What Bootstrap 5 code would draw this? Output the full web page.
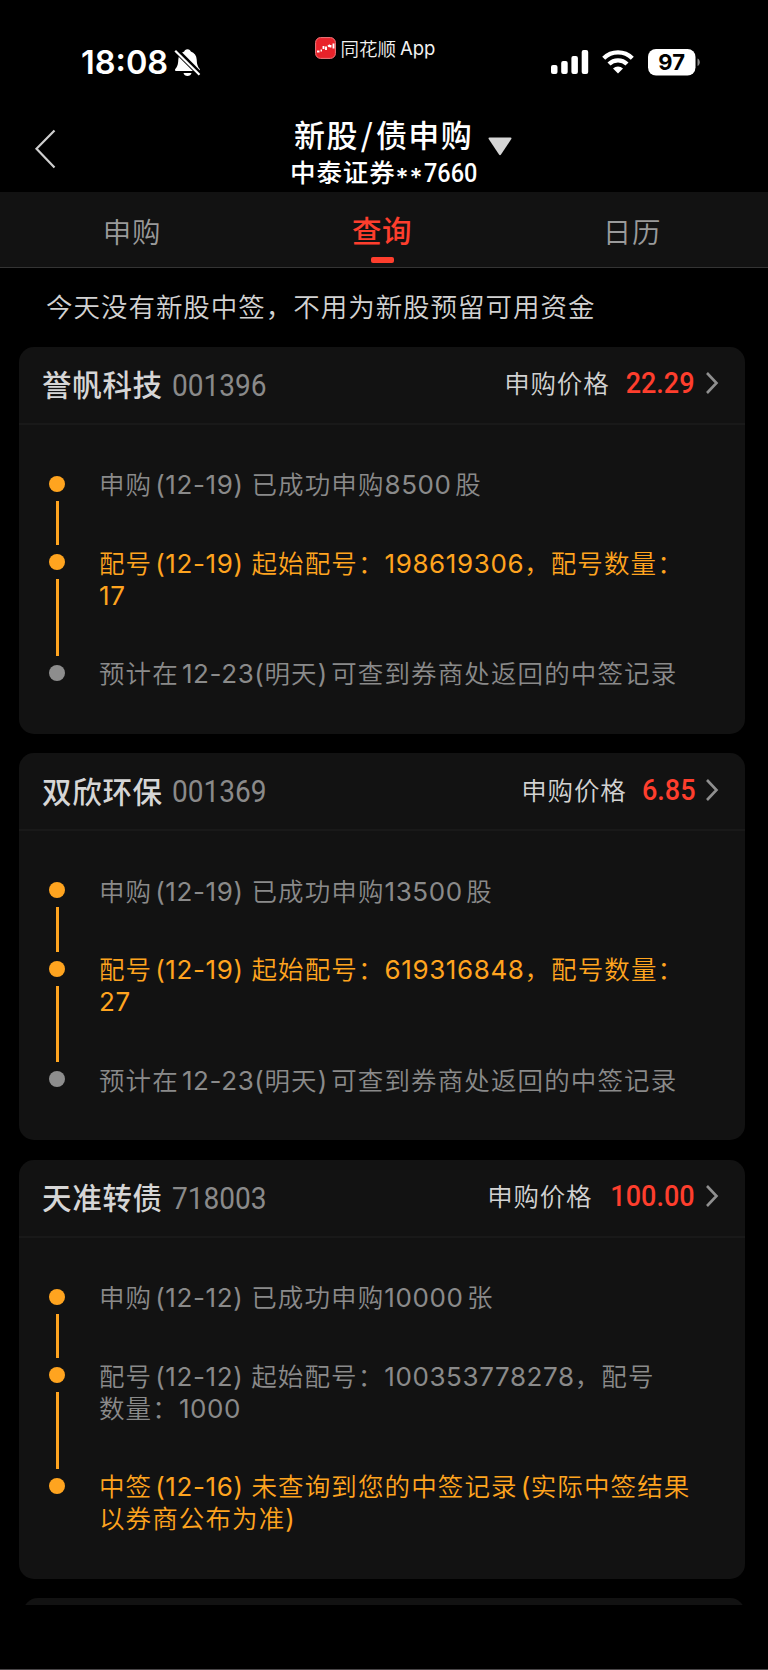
<!DOCTYPE html>
<html lang="zh-CN">
<head>
<meta charset="utf-8">
<meta name="viewport" content="width=device-width, initial-scale=1">
<title>新股/债申购</title>
<link href="https://cdn.jsdelivr.net/npm/bootstrap@5.3.0/dist/css/bootstrap.min.css" rel="stylesheet">
<style>
  body { background: #000; color: #d2d2d2; font-family: Inter, "Noto Sans CJK SC", sans-serif; height: 1670px; overflow: hidden; line-height: 1; }
  .cjk { font-family: "Noto Sans CJK SC", sans-serif; }
  .screen { height: 1670px; border-bottom: 1px solid #4a4648; }
  .status-row { height: 106px; padding: 0 68px 0 81px; color: #fff; }
  .clock { font-size: 32.5px; font-weight: 600; margin-top: 46px; line-height: 34px; width: 92px; letter-spacing: 0; }
  .bell { margin-top: 48px; }
  .app-tag { font-size: 18.5px; line-height: 26px; margin-top: 34.5px; margin-left: 114px; color: #f2f2f2; font-weight: 350; }
  .app-tag svg { margin-right: 4.5px; }
  .app-tag .latin { font-family: Inter, sans-serif; font-size: 18.5px; margin-left: 4px; font-weight: 400; }
  .status-icons { margin-top: 48px; height: 28px; }
  .wifi { margin-left: 13px; }
  .battery { margin-left: 14.5px; }
  .title-row { height: 86px; }
  .back-btn { width: 290px; padding: 23px 0 0 34px; }
  .page-title { font-size: 31px; font-weight: 500; line-height: 36px; color: #fff; letter-spacing: 1.45px; margin: 10px 0 0 4px; white-space: nowrap; }
  .page-title .slash { display: inline-block; width: 17px; text-align: center; }
  .caret { margin: 31px 0 0 15px; }
  .broker { font-size: 25.5px; font-weight: 500; line-height: 32px; color: #fff; letter-spacing: .9px; margin-top: -1px; white-space: nowrap; }
  .stars { font-family: Inter, sans-serif; display: inline-block; line-height: 0; position: relative; top: 5px; letter-spacing: 1px; font-size: 25px; }
  .din { font-family: Roboto, sans-serif; display: inline-block; transform: scaleX(.92); transform-origin: left center; white-space: nowrap; letter-spacing: 0; }
  .tabs { height: 76px; background: #121212; border-bottom: 1px solid #343434; font-size: 28.5px; padding: 0 11px 0 7px; }
  .tabs .nav-link { color: #9a9a9a; padding: 19px 0 0; line-height: 40px; border: 0; font-weight: 350; letter-spacing: .8px; }
  .tabs .nav-link.active { color: #fe3e2d; font-weight: 500; font-size: 29.5px; letter-spacing: .5px; padding-top: 17px; }
  .tabs .bar { width: 23px; height: 6px; border-radius: 2px; background: #fe3e2d; margin: 7.5px auto 0; }
  .notice { padding: 18.5px 0 0 46px; height: 78.5px; font-size: 26.5px; line-height: 38px; letter-spacing: .97px; font-weight: 350; }
  .ipo { margin: 0 23px 19.5px 19px; background: #121212; border: 0; border-radius: 15px; }
  .ipo-head { height: 78px; padding: 0 23px 3px 23px; border-bottom: 2px solid #191919; }
  .ipo-name { font-size: 29.5px; font-weight: 500; letter-spacing: .7px; color: #d6d6d6; line-height: 40px; }
  .ipo-code { font-size: 30.5px; color: #8a8a8a; width: 110px; margin: 5px 0 0 9px; line-height: 40px; }
  .price-label { font-size: 25.5px; letter-spacing: .8px; color: #d2d2d2; font-weight: 350; line-height: 36px; margin-top: -1.5px; }
  .price { font-size: 30px; font-weight: 500; color: #fe3e2d; transform: scaleX(.9); transform-origin: right center; line-height: 36px; margin-left: 9px; }
  .chev { margin-left: 7px; }
  .steps { padding: 43.5px 30px; }
  .rail { width: 16px; margin-right: 34px; padding-top: 7.75px; }
  .dot { width: 16px; height: 16px; border-radius: 50%; background: #ffa41f; flex: none; }
  .dot.off { background: #8d8d8d; }
  .wire { width: 3px; background: #ffa41f; margin: 9px 0 1.5px; }
  .step { line-height: 32px; font-size: 25.5px; letter-spacing: 1.12px; color: #8a8a8a; font-weight: 350; white-space: nowrap; }
  .step .txt { padding-top: 1px; }
  .step:not(:last-child) .txt { padding-bottom: 45.5px; }
  .step.hot { color: #ffa41f; }
  .n { letter-spacing: .6px; font-size: 26px; font-weight: 400; }
  .lg { margin-left: 3px; }
  .rg { margin-right: 3.5px; }
  .peek { height: 7px; overflow: hidden; }
  .peek .ipo { margin-left: 23px; }
</style>
</head>
<body>
<div class="screen">
<header>
  <div class="status-row d-flex align-items-start">
    <div class="clock">18:08</div>
    <svg class="bell" width="28" height="30" viewBox="0 0 28 30" fill="#fff"><path d="M14.500 1.200c1.900 0 3 1 3.300 2.300 3.600 1.300 5.700 4.200 5.900 8 .2 5.300 1.200 7.300 2.800 9.200.9 1.100.4 2.400-1 2.400H3.500c-1.500 0-2-1.300-1-2.400C4.200 18.700 5.200 16.700 5.300 11.500c.2-3.800 2.300-6.700 5.900-8 .3-1.300 1.400-2.300 3.300-2.300zM10.500 25h8c-.4 1.900-2 3-4 3s-3.600-1.100-4-3z"/><path d="M3 2.300 26.500 25.800" stroke="#000" stroke-width="5.500"/><path d="M2.200 2.800 26.500 26.800" stroke="#fff" stroke-width="2.200"/></svg>
    <div class="app-tag cjk d-flex align-items-center"><svg width="21" height="22" viewBox="0 0 21 22"><rect x=".6" y=".6" width="19.800" height="20.800" rx="5" fill="#e8222a" stroke="#f27a7d" stroke-width="1"/><path d="M2 14.500h2.500M5.500 13.500h1.500M8.500 9v3M11 9.500v3.500M13 9.500l2-1.500M15.500 8v2.500M18.500 6.500v5" stroke="#fff" stroke-width="1.900"/></svg><span>同花顺</span><span class="latin">App</span></div>
    <div class="status-icons d-flex align-items-center ms-auto">
      <svg width="38" height="24" viewBox="0 0 38 24" fill="#fff"><rect x="0" y="15" width="6.500" height="9" rx="2"/><rect x="10.200" y="11" width="6.500" height="13" rx="2"/><rect x="20.400" y="6" width="6.500" height="18" rx="2"/><rect x="30.700" y="0" width="6.500" height="24" rx="2"/></svg>
      <svg class="wifi" width="32" height="24" viewBox="0 0 32 24" fill="none" stroke="#fff" stroke-width="4.300"><path d="M1.700 8.200a20.500 20.500 0 0 1 28.600 0"/><path d="M7 14a12.800 12.800 0 0 1 18 0"/><path d="M16 23.500l-5-5a7.300 7.300 0 0 1 10 0z" fill="#fff" stroke="none"/></svg>
      <svg class="battery" width="52" height="27" viewBox="0 0 52 27"><rect width="47.500" height="26.500" rx="8" fill="#fff"/><path d="M49.500 9.500c3 .8 3 6.700 0 7.500z" fill="#8a8a8a"/><text x="23.700" y="21" text-anchor="middle" font-family="Inter" font-size="22" font-weight="700" fill="#000">97</text></svg>
    </div>
  </div>
  <div class="title-row d-flex cjk">
    <div class="back-btn"><svg width="22" height="40" viewBox="0 0 22 40" fill="none" stroke="#cfcfcf" stroke-width="2.200"><path d="M20.500 1.500 2.500 19.800 20.500 38.500"/></svg></div>
    <div>
      <div class="d-flex"><div class="page-title">新股<span class="slash">/</span>债申购</div><svg class="caret" width="24" height="19" viewBox="0 0 24 19"><path d="M1.500.5h21q1.500 0 .8 1.500L13 17.500q-1 1.300-2 0L.7 2Q0 .5 1.500.5z" fill="#d6d6d6"/></svg></div>
      <div class="broker">中泰证券<span class="stars">**</span><span class="din">7660</span></div>
    </div>
  </div>
</header>
<nav class="tabs nav nav-justified flex-nowrap cjk">
  <a class="nav-item nav-link" href="#">申购</a>
  <a class="nav-item nav-link active" href="#">查询<div class="bar"></div></a>
  <a class="nav-item nav-link" href="#">日历</a>
</nav>
<main>
  <div class="notice cjk">今天没有新股中签，不用为新股预留可用资金</div>

  <section class="card ipo">
    <div class="ipo-head d-flex align-items-center">
      <span class="ipo-name cjk">誉帆科技</span><span class="din ipo-code">001396</span>
      <span class="price-label cjk ms-auto">申购价格</span><span class="din price">22.29</span>
      <svg class="chev" width="20" height="24" viewBox="0 0 20 24" fill="none" stroke="#8f8f8f" stroke-width="2.600"><path d="M5 2l9.500 10L5 22"/></svg>
    </div>
    <div class="steps">
      <div class="step d-flex"><div class="rail d-flex flex-column align-items-center"><i class="dot"></i><i class="wire flex-grow-1"></i></div><div class="txt">申购<span class="n lg">(12-19) </span>已成功申购<span class="n rg">8500</span>股</div></div>
      <div class="step hot d-flex"><div class="rail d-flex flex-column align-items-center"><i class="dot"></i><i class="wire flex-grow-1"></i></div><div class="txt">配号<span class="n lg">(12-19) </span>起始配号：<span class="n">198619306</span>，配号数量：<br><span class="n">17</span></div></div>
      <div class="step d-flex"><div class="rail d-flex flex-column align-items-center"><i class="dot off"></i></div><div class="txt">预计在<span class="n lg">12-23(</span>明天<span class="n rg">)</span>可查到券商处返回的中签记录</div></div>
    </div>
  </section>

  <section class="card ipo">
    <div class="ipo-head d-flex align-items-center">
      <span class="ipo-name cjk">双欣环保</span><span class="din ipo-code">001369</span>
      <span class="price-label cjk ms-auto">申购价格</span><span class="din price">6.85</span>
      <svg class="chev" width="20" height="24" viewBox="0 0 20 24" fill="none" stroke="#8f8f8f" stroke-width="2.600"><path d="M5 2l9.500 10L5 22"/></svg>
    </div>
    <div class="steps">
      <div class="step d-flex"><div class="rail d-flex flex-column align-items-center"><i class="dot"></i><i class="wire flex-grow-1"></i></div><div class="txt">申购<span class="n lg">(12-19) </span>已成功申购<span class="n rg">13500</span>股</div></div>
      <div class="step hot d-flex"><div class="rail d-flex flex-column align-items-center"><i class="dot"></i><i class="wire flex-grow-1"></i></div><div class="txt">配号<span class="n lg">(12-19) </span>起始配号：<span class="n">619316848</span>，配号数量：<br><span class="n">27</span></div></div>
      <div class="step d-flex"><div class="rail d-flex flex-column align-items-center"><i class="dot off"></i></div><div class="txt">预计在<span class="n lg">12-23(</span>明天<span class="n rg">)</span>可查到券商处返回的中签记录</div></div>
    </div>
  </section>

  <section class="card ipo">
    <div class="ipo-head d-flex align-items-center">
      <span class="ipo-name cjk">天准转债</span><span class="din ipo-code">718003</span>
      <span class="price-label cjk ms-auto">申购价格</span><span class="din price">100.00</span>
      <svg class="chev" width="20" height="24" viewBox="0 0 20 24" fill="none" stroke="#8f8f8f" stroke-width="2.600"><path d="M5 2l9.500 10L5 22"/></svg>
    </div>
    <div class="steps">
      <div class="step d-flex"><div class="rail d-flex flex-column align-items-center"><i class="dot"></i><i class="wire flex-grow-1"></i></div><div class="txt">申购<span class="n lg">(12-12) </span>已成功申购<span class="n rg">10000</span>张</div></div>
      <div class="step d-flex"><div class="rail d-flex flex-column align-items-center"><i class="dot"></i><i class="wire flex-grow-1"></i></div><div class="txt">配号<span class="n lg">(12-12) </span>起始配号：<span class="n">100353778278</span>，配号<br>数量：<span class="n">1000</span></div></div>
      <div class="step hot d-flex"><div class="rail d-flex flex-column align-items-center"><i class="dot"></i></div><div class="txt">中签<span class="n lg">(12-16) </span>未查询到您的中签记录<span class="n lg">(</span>实际中签结果<br>以券商公布为准<span class="n">)</span></div></div>
    </div>
  </section>

  <div class="peek"><div class="card ipo"><div class="ipo-head"></div></div></div>
</main>
</div>
<script src="https://cdn.jsdelivr.net/npm/bootstrap@5.3.0/dist/js/bootstrap.bundle.min.js"></script>
</body>
</html>
